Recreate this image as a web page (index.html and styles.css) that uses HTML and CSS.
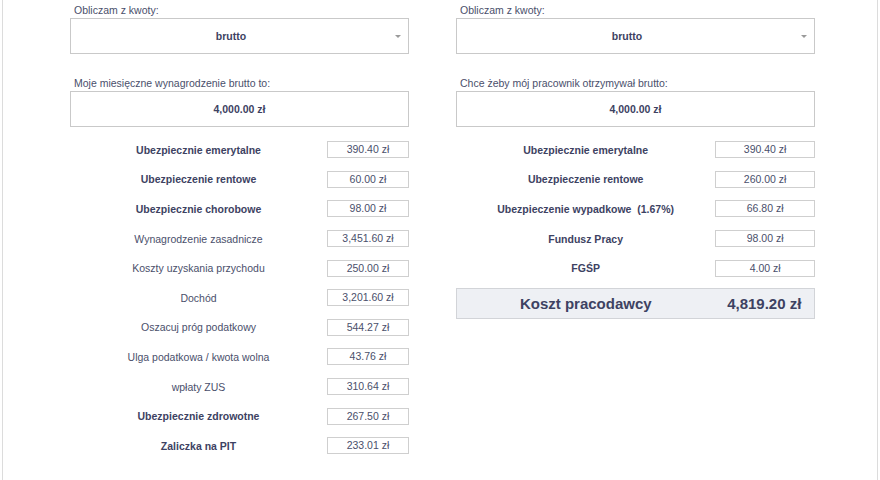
FILE: index.html
```html
<!DOCTYPE html>
<html lang="pl">
<head>
    <meta charset="UTF-8">
    <meta name="viewport" content="width=device-width, initial-scale=1.0">
    <title>Kalkulator wynagrodzeń</title>
    <link rel="stylesheet" href="styles.css">
</head>
<body>
    <div class="page">
        <!-- Pracownik -->
        <div class="column column-left">
            <label class="field-label">Obliczam z kwoty:</label>
            <div class="select-box">
                <span>brutto</span>
                <span class="arrow"></span>
            </div>

            <label class="field-label">Moje miesięczne wynagrodzenie brutto to:</label>
            <div class="amount-box">4,000.00 zł</div>

            <div class="rows">
                <div class="row"><span class="name bold">Ubezpiecznie emerytalne</span><span class="value">390.40 zł</span></div>
                <div class="row"><span class="name bold">Ubezpieczenie rentowe</span><span class="value">60.00 zł</span></div>
                <div class="row"><span class="name bold">Ubezpiecznie chorobowe</span><span class="value">98.00 zł</span></div>
                <div class="row"><span class="name">Wynagrodzenie zasadnicze</span><span class="value">3,451.60 zł</span></div>
                <div class="row"><span class="name">Koszty uzyskania przychodu</span><span class="value">250.00 zł</span></div>
                <div class="row"><span class="name">Dochód</span><span class="value">3,201.60 zł</span></div>
                <div class="row"><span class="name">Oszacuj próg podatkowy</span><span class="value">544.27 zł</span></div>
                <div class="row"><span class="name">Ulga podatkowa / kwota wolna</span><span class="value">43.76 zł</span></div>
                <div class="row"><span class="name">wpłaty ZUS</span><span class="value">310.64 zł</span></div>
                <div class="row"><span class="name bold">Ubezpiecznie zdrowotne</span><span class="value">267.50 zł</span></div>
                <div class="row"><span class="name bold">Zaliczka na PIT</span><span class="value">233.01 zł</span></div>
            </div>
        </div>

        <!-- Pracodawca -->
        <div class="column column-right">
            <label class="field-label">Obliczam z kwoty:</label>
            <div class="select-box">
                <span>brutto</span>
                <span class="arrow"></span>
            </div>

            <label class="field-label">Chce żeby mój pracownik otrzymywał brutto:</label>
            <div class="amount-box">4,000.00 zł</div>

            <div class="rows">
                <div class="row"><span class="name bold">Ubezpiecznie emerytalne</span><span class="value">390.40 zł</span></div>
                <div class="row"><span class="name bold">Ubezpieczenie rentowe</span><span class="value">260.00 zł</span></div>
                <div class="row"><span class="name bold">Ubezpieczenie wypadkowe&nbsp; (1.67%)</span><span class="value">66.80 zł</span></div>
                <div class="row"><span class="name bold">Fundusz Pracy</span><span class="value">98.00 zł</span></div>
                <div class="row"><span class="name bold">FGŚP</span><span class="value">4.00 zł</span></div>
            </div>

            <div class="total">
                <span class="name">Koszt pracodawcy</span>
                <span class="total-value">4,819.20 zł</span>
            </div>
        </div>
    </div>
</body>
</html>
```

FILE: styles.css
```css
body {
    margin: 0;
    font-family: "Liberation Sans", Arial, sans-serif;
    background-color: #ffffff;
    color: #3d4262;
    overflow: hidden;
}

.page {
    margin: 0 2px;
    height: 480px;
    border-left: 1px solid #dcdcdc;
    border-right: 1px solid #dcdcdc;
    display: grid;
    grid-template-columns: 339px 359px;
    column-gap: 47px;
    padding-left: 67px;
}

.column {
    display: flex;
    flex-direction: column;
}

.field-label {
    font-size: 10.5px;
    color: #4a4f6b;
    padding-left: 4px;
    height: 13px;
    line-height: 13px;
    margin-top: 4px;
    margin-bottom: 1px;
}

.column .field-label:nth-of-type(2) {
    margin-top: 23px;
}

.select-box,
.amount-box {
    height: 34px;
    border: 1px solid #c9c9c9;
    display: flex;
    align-items: center;
    justify-content: center;
    font-size: 10.5px;
    font-weight: bold;
    color: #3d4262;
    position: relative;
}

.select-box span:first-child {
    margin-right: 17px;
}

.arrow {
    position: absolute;
    right: 7px;
    top: 16px;
    width: 0;
    height: 0;
    border-left: 3px solid transparent;
    border-right: 3px solid transparent;
    border-top: 3px solid #9a9a9a;
}

.rows {
    margin-top: 8px;
}

.row {
    height: 29.6px;
    display: flex;
    align-items: center;
}

.column-left .row .name {
    width: 257px;
}

.column-right .row .name {
    width: 260px;
}

.name {
    text-align: center;
    font-size: 10.5px;
    color: #4a4f6b;
}

.name.bold {
    font-weight: bold;
    color: #3d4262;
}

.value {
    height: 15px;
    border: 1px solid #cfcfcf;
    font-size: 10.5px;
    color: #4a4f6b;
    text-align: center;
    line-height: 15px;
}

.column-left .value {
    width: 80px;
}

.column-right .value {
    width: 98px;
}

.total {
    margin-top: 5px;
    height: 29px;
    border: 1px solid #d2d4d8;
    background-color: #eef0f4;
    display: flex;
    align-items: center;
    font-weight: bold;
    font-size: 15px;
    color: #3d4262;
}

.total .name {
    width: 259px;
    font-size: 15px;
    color: #3d4262;
}

.total-value {
    width: 100px;
    text-align: center;
}
```
